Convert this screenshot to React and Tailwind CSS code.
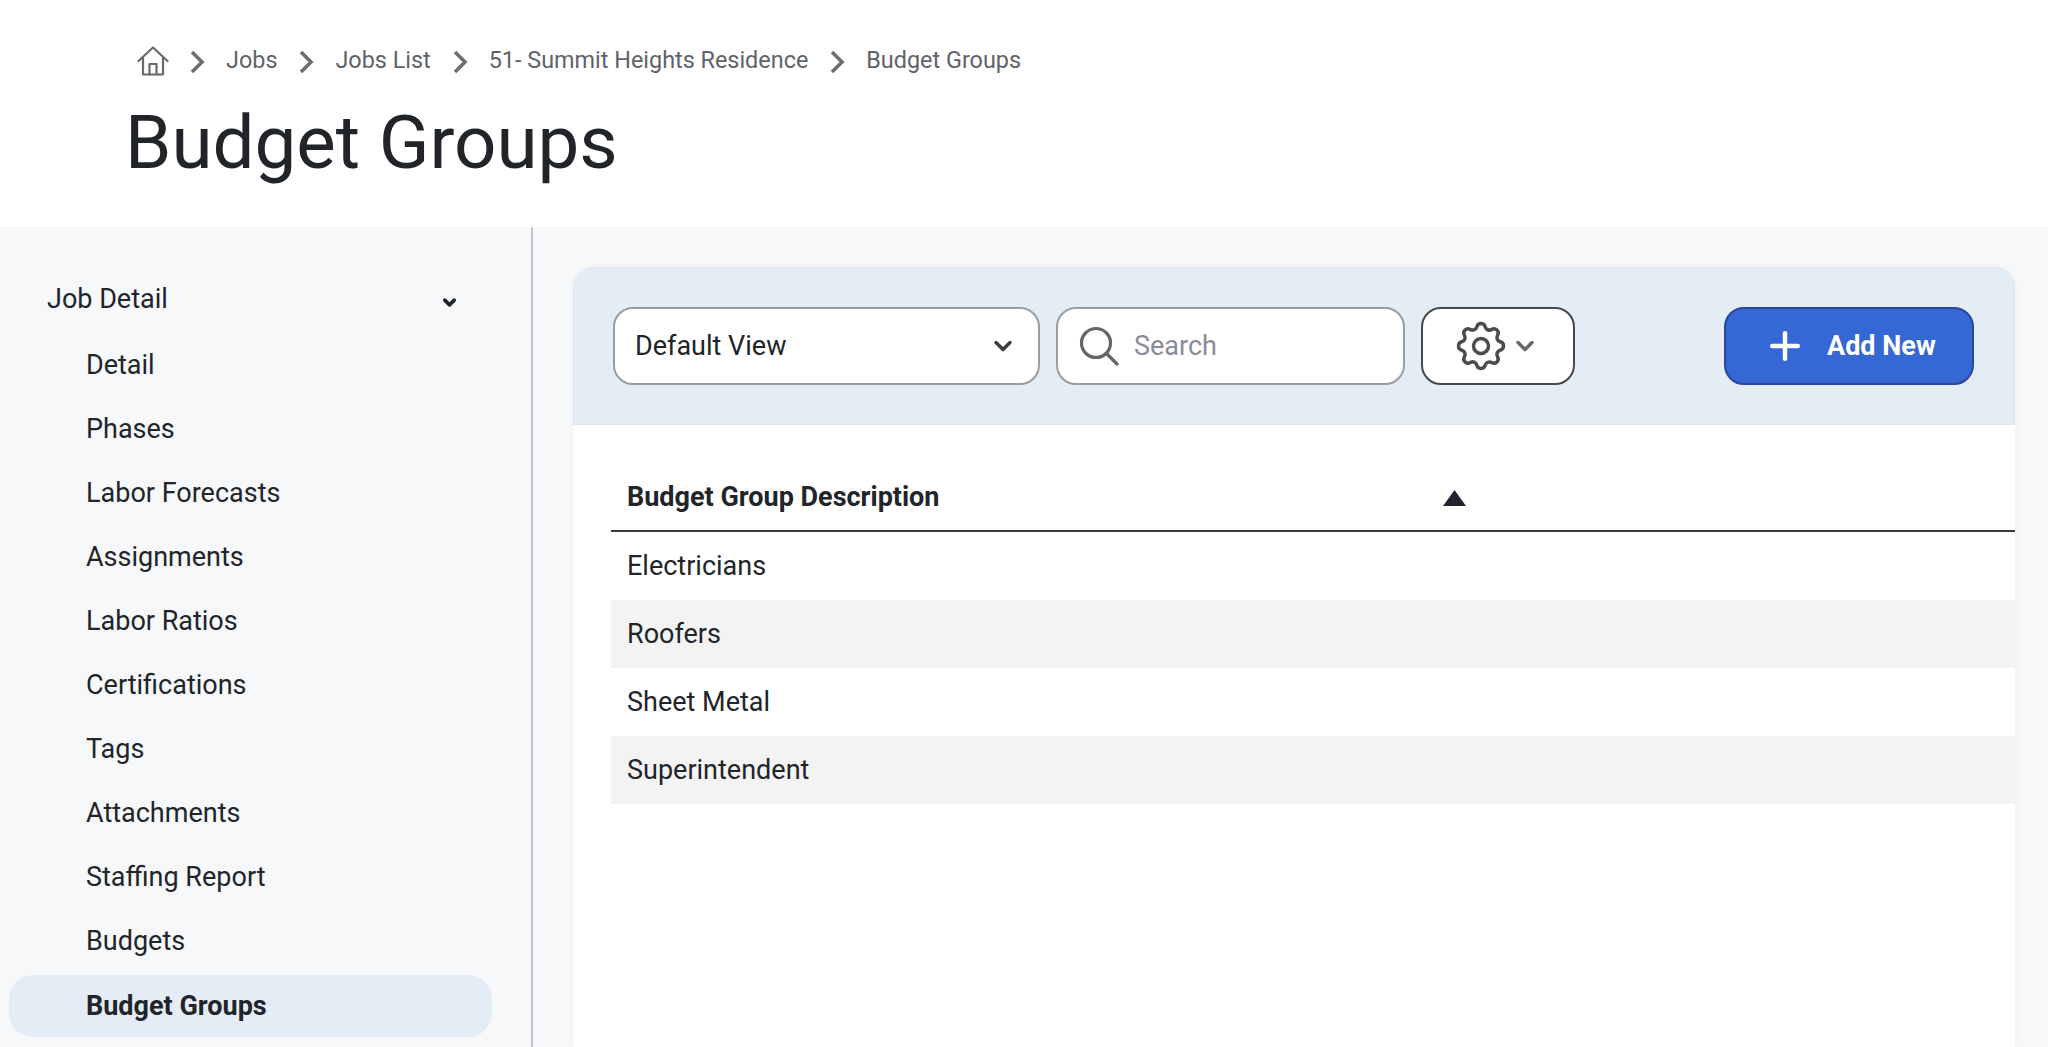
import React from 'react';
import { ChevronDown, Plus } from 'lucide-react';
import { HiOutlineCog } from 'react-icons/hi';

const navItems = [
  'Detail',
  'Phases',
  'Labor Forecasts',
  'Assignments',
  'Labor Ratios',
  'Certifications',
  'Tags',
  'Attachments',
  'Staffing Report',
  'Budgets',
];

const crumbs = ['Jobs', 'Jobs List', '51- Summit Heights Residence', 'Budget Groups'];
const rows = ['Electricians', 'Roofers', 'Sheet Metal', 'Superintendent'];

function HomeIcon() {
  return (
    <svg width="32" height="30" viewBox="0 0 32 30" fill="none" stroke="#666a6e" strokeWidth="2.2" strokeLinejoin="round" strokeLinecap="round">
      <path d="M1.5 15 16 1.5 30.5 15" />
      <path d="M6 11.5V28.5H26V11.5" />
      <path d="M12.5 28.5V18H19.5V28.5" />
    </svg>
  );
}

function CrumbChevron() {
  return (
    <svg width="15" height="24" viewBox="0 0 15 24" fill="none" stroke="#6b6f73" strokeWidth="3.6">
      <path d="M2 2l10 10-10 10" />
    </svg>
  );
}

function SearchIcon() {
  return (
    <svg width="40" height="40" viewBox="0 0 40 40" fill="none" stroke="#636669" strokeWidth="3.2" strokeLinecap="round">
      <circle cx="17" cy="17" r="14.5" />
      <path d="M27.5 27.5 38 38" />
    </svg>
  );
}

function SortUp() {
  return (
    <svg width="23" height="16" viewBox="0 0 23 16" fill="#212330">
      <path d="M11.5 0 23 16H0z" />
    </svg>
  );
}

export default function App() {
  return (
    <div className="h-screen overflow-hidden bg-white text-[#212529] font-['Roboto',sans-serif] flex flex-col">
      <header className="h-[227px] shrink-0 pl-[125px]">
        <nav className="h-[46px] mt-[38px] pl-3 flex items-center text-[23.4px] text-[#5f6368]">
          <HomeIcon />
          <span className="ml-[21px] mt-[2px]"><CrumbChevron /></span>
          {crumbs.map((c, i) => (
            <React.Fragment key={c}>
              <span className="ml-[21px]">{c}</span>
              {i < crumbs.length - 1 && <span className="ml-[22px] mt-[2px]"><CrumbChevron /></span>}
            </React.Fragment>
          ))}
        </nav>
        <h1 className="text-[74.5px] leading-[84px] mt-[17px] text-[#212529] font-normal">Budget Groups</h1>
      </header>

      <div className="flex-1 flex min-h-0 bg-[#f6f8fa]">
        <aside className="w-[533px] shrink-0 border-r-2 border-[#c4c7cb] text-[27px]">
          <div className="h-[64px] mt-[40px] mb-[2px] pl-[47px] pr-[72px] flex items-center justify-between">
            <span>Job Detail</span>
            <ChevronDown size={19} strokeWidth={4.5} className="text-[#212529] mt-[6px]" />
          </div>
          {navItems.map((n) => (
            <div key={n} className="h-[64px] pl-[86px] flex items-center">{n}</div>
          ))}
          <div className="h-[62px] mt-[2px] mx-[9px] w-[483px] pl-[77px] flex items-center rounded-[24px] bg-[#e4ecf6] font-bold">
            Budget Groups
          </div>
        </aside>

        <main className="flex-1 min-w-0 pt-[40px] pl-[40px] pr-[33px]">
          <div className="h-full bg-white rounded-t-[20px] shadow-[0_0_6px_rgba(0,0,0,0.04)]">
            <div className="h-[158px] rounded-t-[20px] bg-[#e4ecf6] border border-[#dde5f0] pt-[39px] pl-[39px] pr-[40px] flex items-start">
              <div className="w-[427px] h-[78px] rounded-[20px] bg-white border-2 border-[#9a9da1] pl-[20px] pr-[21px] flex items-center justify-between text-[27px]">
                <span>Default View</span>
                <ChevronDown size={28} strokeWidth={3} className="text-[#3a3d42]" />
              </div>
              <div className="w-[349px] h-[78px] ml-[16px] rounded-[20px] bg-white border-2 border-[#9a9da1] pl-[21px] flex items-center text-[27px] text-[#8a8c99]">
                <SearchIcon />
                <span className="ml-[15px]">Search</span>
              </div>
              <div className="w-[154px] h-[78px] ml-[16px] rounded-[20px] bg-white border-2 border-[#45484c] pl-[28px] flex items-center">
                <HiOutlineCog size={60} strokeWidth={1.5} className="text-[#4a4d50] [&_path]:[stroke-width:1.4]" />
                <ChevronDown size={28} strokeWidth={3} className="text-[#66696c]" />
              </div>
              <div className="w-[250px] h-[78px] ml-auto rounded-[20px] bg-[#3568d4] border-2 border-[#25499b] pl-[37px] flex items-center text-white text-[27px] font-bold">
                <Plus size={44} strokeWidth={2.4} />
                <span className="ml-[20px]">Add New</span>
              </div>
            </div>

            <div className="pl-[38px]">
              <div className="h-[107px] pt-[39px] border-b-2 border-[#3a3c40] flex items-center pl-[16px] text-[27px] font-bold">
                <span className="w-[816px]">Budget Group Description</span>
                <span className="mt-[2px]"><SortUp /></span>
              </div>
              {rows.map((r, i) => (
                <div key={r} className={i % 2 ? 'h-[68px] pl-[16px] flex items-center text-[27px] bg-[#f3f3f3]' : 'h-[68px] pl-[16px] flex items-center text-[27px]'}>
                  {r}
                </div>
              ))}
            </div>
          </div>
        </main>
      </div>
    </div>
  );
}
